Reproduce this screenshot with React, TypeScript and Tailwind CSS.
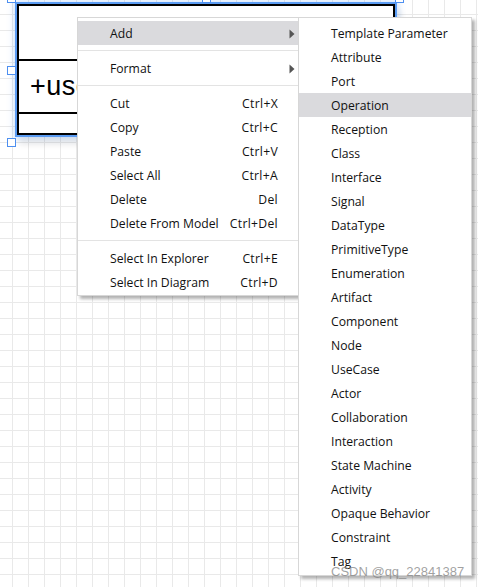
import React from "react";

type MenuRow =
  | { kind: "item"; label: string; shortcut?: string; submenu?: boolean; active?: boolean }
  | { kind: "sep" };

const mainRows: MenuRow[] = [
  { kind: "item", label: "Add", submenu: true, active: true },
  { kind: "sep" },
  { kind: "item", label: "Format", submenu: true },
  { kind: "sep" },
  { kind: "item", label: "Cut", shortcut: "Ctrl+X" },
  { kind: "item", label: "Copy", shortcut: "Ctrl+C" },
  { kind: "item", label: "Paste", shortcut: "Ctrl+V" },
  { kind: "item", label: "Select All", shortcut: "Ctrl+A" },
  { kind: "item", label: "Delete", shortcut: "Del" },
  { kind: "item", label: "Delete From Model", shortcut: "Ctrl+Del" },
  { kind: "sep" },
  { kind: "item", label: "Select In Explorer", shortcut: "Ctrl+E" },
  { kind: "item", label: "Select In Diagram", shortcut: "Ctrl+D" },
];

const subItems = [
  "Template Parameter",
  "Attribute",
  "Port",
  "Operation",
  "Reception",
  "Class",
  "Interface",
  "Signal",
  "DataType",
  "PrimitiveType",
  "Enumeration",
  "Artifact",
  "Component",
  "Node",
  "UseCase",
  "Actor",
  "Collaboration",
  "Interaction",
  "State Machine",
  "Activity",
  "Opaque Behavior",
  "Constraint",
  "Tag",
];

function Arrow() {
  return (
    <svg width="6" height="10" viewBox="0 0 6 10" className="absolute right-[3px] top-[8px]">
      <path d="M0.5 0.5 L5.5 5 L0.5 9.5 Z" fill="#555" />
    </svg>
  );
}

function Handle({ className }: { className: string }) {
  return <div className={`absolute w-[9px] h-[9px] bg-white border border-[#4d8ff0] ${className}`} />;
}

export default function App() {
  const font = "font-['Open_Sans','Noto_Sans_CJK_SC',sans-serif]";
  return (
    <div className="relative w-[478px] h-[587px] overflow-hidden bg-white bg-[linear-gradient(to_right,#e9e9e9_1px,transparent_1px),linear-gradient(to_bottom,#e9e9e9_1px,transparent_1px)] bg-[size:16px_16px] bg-[position:12px_14px]">
      {/* UML class box with selection */}
      <div className="absolute left-[15px] top-[2px] w-[382px] h-[135px] border-2 border-[#5a9bf2] shadow-[0_0_6px_2px_rgba(90,155,242,0.25),4px_8px_6px_rgba(0,0,0,0.08)]">
        <div className="w-full h-full bg-white border-2 border-black flex flex-col">
          <div className="h-[55px] border-b-2 border-black" />
          <div className="h-[53px] border-b-2 border-black flex items-center pl-[11px]">
            <span className="font-['Liberation_Sans',Arial,sans-serif] text-[27px] tracking-[0.5px] leading-none text-black">+userName</span>
          </div>
          <div className="flex-1" />
        </div>
      </div>
      <Handle className="left-[7px] top-[-6px]" />
      <Handle className="left-[202px] top-[-6px]" />
      <Handle className="left-[395px] top-[-6px]" />
      <Handle className="left-[7px] top-[66px]" />
      <Handle className="left-[7px] top-[138px]" />

      {/* Main context menu */}
      <div
        className={`absolute left-[77px] top-[17px] w-[222px] bg-white border border-[#d7d7d7] pt-[3px] pb-[1px] shadow-[3px_3px_3px_rgba(0,0,0,0.3)] ${font} text-[12.2px] text-[#111]`}
      >
        {mainRows.map((r, i) =>
          r.kind === "sep" ? (
            <div key={i} className="h-[11px] flex items-center">
              <div className="w-full h-px bg-[#e3e3e3]" />
            </div>
          ) : (
            <div
              key={i}
              className={`relative h-[24px] flex items-center pt-[2px] pl-[32px] pr-[20px] ${r.active ? "bg-[#dadadd]" : ""}`}
            >
              <span className="flex-1 whitespace-nowrap">{r.label}</span>
              {r.shortcut && <span className="whitespace-nowrap tracking-[0.3px]">{r.shortcut}</span>}
              {r.submenu && <Arrow />}
            </div>
          )
        )}
      </div>

      {/* Submenu */}
      <div
        className={`absolute left-[298px] top-[17px] w-[174px] bg-white border border-[#d7d7d7] pt-[3px] pb-[2px] shadow-[3px_3px_3px_rgba(0,0,0,0.3)] ${font} text-[12.2px] text-[#111]`}
      >
        {subItems.map((s) => (
          <div
            key={s}
            className={`h-[24px] flex items-center pt-[2px] pl-[32px] whitespace-nowrap ${s === "Operation" ? "bg-[#dadadd]" : ""}`}
          >
            {s}
          </div>
        ))}
      </div>

      {/* Watermark */}
      <div className="absolute left-[331px] top-[564px] font-['Liberation_Sans',Arial,sans-serif] text-[13px] leading-[15px] text-[rgba(130,130,130,0.75)] whitespace-nowrap">
        CSDN @qq_22841387
      </div>
    </div>
  );
}
